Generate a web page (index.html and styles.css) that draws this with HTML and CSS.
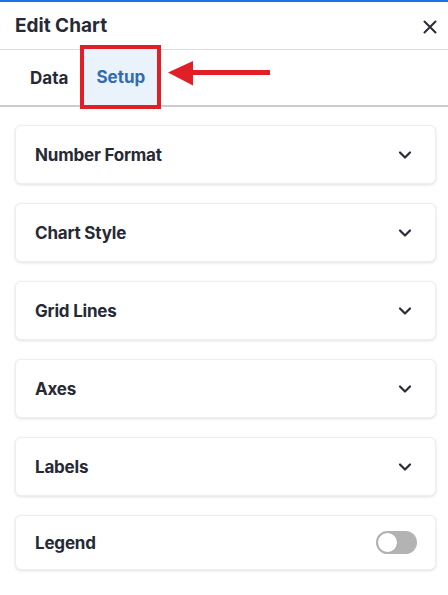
FILE: index.html
```html
<!DOCTYPE html>
<html>
<head>
<meta charset="utf-8">
<link rel="stylesheet" href="styles.css">
</head>
<body>
<div class="panel">
  <header class="header">
    <h1 class="title">Edit Chart</h1>
    <button class="close" aria-label="Close">
      <svg width="14" height="14" viewBox="0 0 14 14"><path d="M1.5 1.5 L12.5 12.5 M12.5 1.5 L1.5 12.5" stroke="#2a2c36" stroke-width="2" stroke-linecap="round"/></svg>
    </button>
  </header>
  <nav class="tabs">
    <div class="tab">Data</div>
    <div class="tab tab-active">Setup</div>
    <svg class="arrow" width="104" height="26" viewBox="0 0 104 26"><path d="M0 11.5 L25 0 L25 9 L102 9 L102 14 L25 14 L25 24.5 Z" fill="#e21f26"/></svg>
  </nav>
  <main class="sections">
    <div class="card"><span class="card-title">Number Format</span><svg class="chev" width="14" height="10" viewBox="0 0 14 10"><path d="M2 2.5 L7 7.5 L12 2.5" fill="none" stroke="#2a2c36" stroke-width="2.2" stroke-linecap="round" stroke-linejoin="round"/></svg></div>
    <div class="card"><span class="card-title">Chart Style</span><svg class="chev" width="14" height="10" viewBox="0 0 14 10"><path d="M2 2.5 L7 7.5 L12 2.5" fill="none" stroke="#2a2c36" stroke-width="2.2" stroke-linecap="round" stroke-linejoin="round"/></svg></div>
    <div class="card"><span class="card-title">Grid Lines</span><svg class="chev" width="14" height="10" viewBox="0 0 14 10"><path d="M2 2.5 L7 7.5 L12 2.5" fill="none" stroke="#2a2c36" stroke-width="2.2" stroke-linecap="round" stroke-linejoin="round"/></svg></div>
    <div class="card"><span class="card-title">Axes</span><svg class="chev" width="14" height="10" viewBox="0 0 14 10"><path d="M2 2.5 L7 7.5 L12 2.5" fill="none" stroke="#2a2c36" stroke-width="2.2" stroke-linecap="round" stroke-linejoin="round"/></svg></div>
    <div class="card"><span class="card-title">Labels</span><svg class="chev" width="14" height="10" viewBox="0 0 14 10"><path d="M2 2.5 L7 7.5 L12 2.5" fill="none" stroke="#2a2c36" stroke-width="2.2" stroke-linecap="round" stroke-linejoin="round"/></svg></div>
    <div class="card card-legend"><span class="card-title">Legend</span><span class="toggle"><span class="knob"></span></span></div>
  </main>
</div>
</body>
</html>
```
FILE: styles.css
```css
* { box-sizing: border-box; }
html, body { margin: 0; padding: 0; background: #fff; }
body {
  font-family: Inter, "Noto Sans", sans-serif;
  color: #272935;
}
.panel {
  width: 448px;
  height: 595px;
  border-top: 2px solid #1a73e8;
  background: #fff;
}
.header {
  height: 48px;
  display: flex;
  align-items: center;
  justify-content: space-between;
  padding: 0 11px 0 15px;
  border-bottom: 1px solid #dcdcdc;
}
.title {
  margin: 0;
  font-size: 19px;
  font-weight: 700;
}
.close {
  border: 0;
  background: none;
  padding: 0;
  width: 14px;
  height: 14px;
  display: flex;
  margin-top: 2px;
}
.tabs {
  position: relative;
  height: 57px;
  display: flex;
  padding-left: 15px;
  border-bottom: 2px solid #cccccc;
}
.tab {
  display: flex;
  align-items: center;
  padding: 0 15px;
  font-size: 17px;
  font-weight: 700;
  color: #272935;
}
.tab-active {
  margin-left: 1px;
  padding: 0;
  width: 73px;
  justify-content: center;
  background: #eaf2fb;
  color: #2f6db3;
  outline: 4px solid #e21f26;
  height: 56px;
  margin-top: -1px;
}
.arrow {
  position: absolute;
  left: 168px;
  top: 11px;
}
.sections {
  display: flex;
  flex-direction: column;
  gap: 19px;
  padding: 18px 12px 0 15px;
}
.card {
  height: 59px;
  display: flex;
  align-items: center;
  justify-content: space-between;
  padding: 0 23px 0 19px;
  background: #fff;
  border-radius: 6px;
  border: 1px solid #eeeeee;
  box-shadow: 0 1px 3px rgba(0, 0, 0, 0.12);
}
.card-legend {
  height: 55px;
  padding-right: 18px;
}
.card-title {
  font-size: 17px;
  font-weight: 700;
  letter-spacing: -0.2px;
  color: #272935;
}
.chev { display: block; }
.toggle {
  width: 41px;
  height: 23px;
  border-radius: 12px;
  background: #b3b3b3;
  display: flex;
  align-items: center;
  padding-left: 1px;
}
.knob {
  width: 21px;
  height: 21px;
  border-radius: 50%;
  background: #fff;
  border: 1px solid #a8a8a8;
}
```
